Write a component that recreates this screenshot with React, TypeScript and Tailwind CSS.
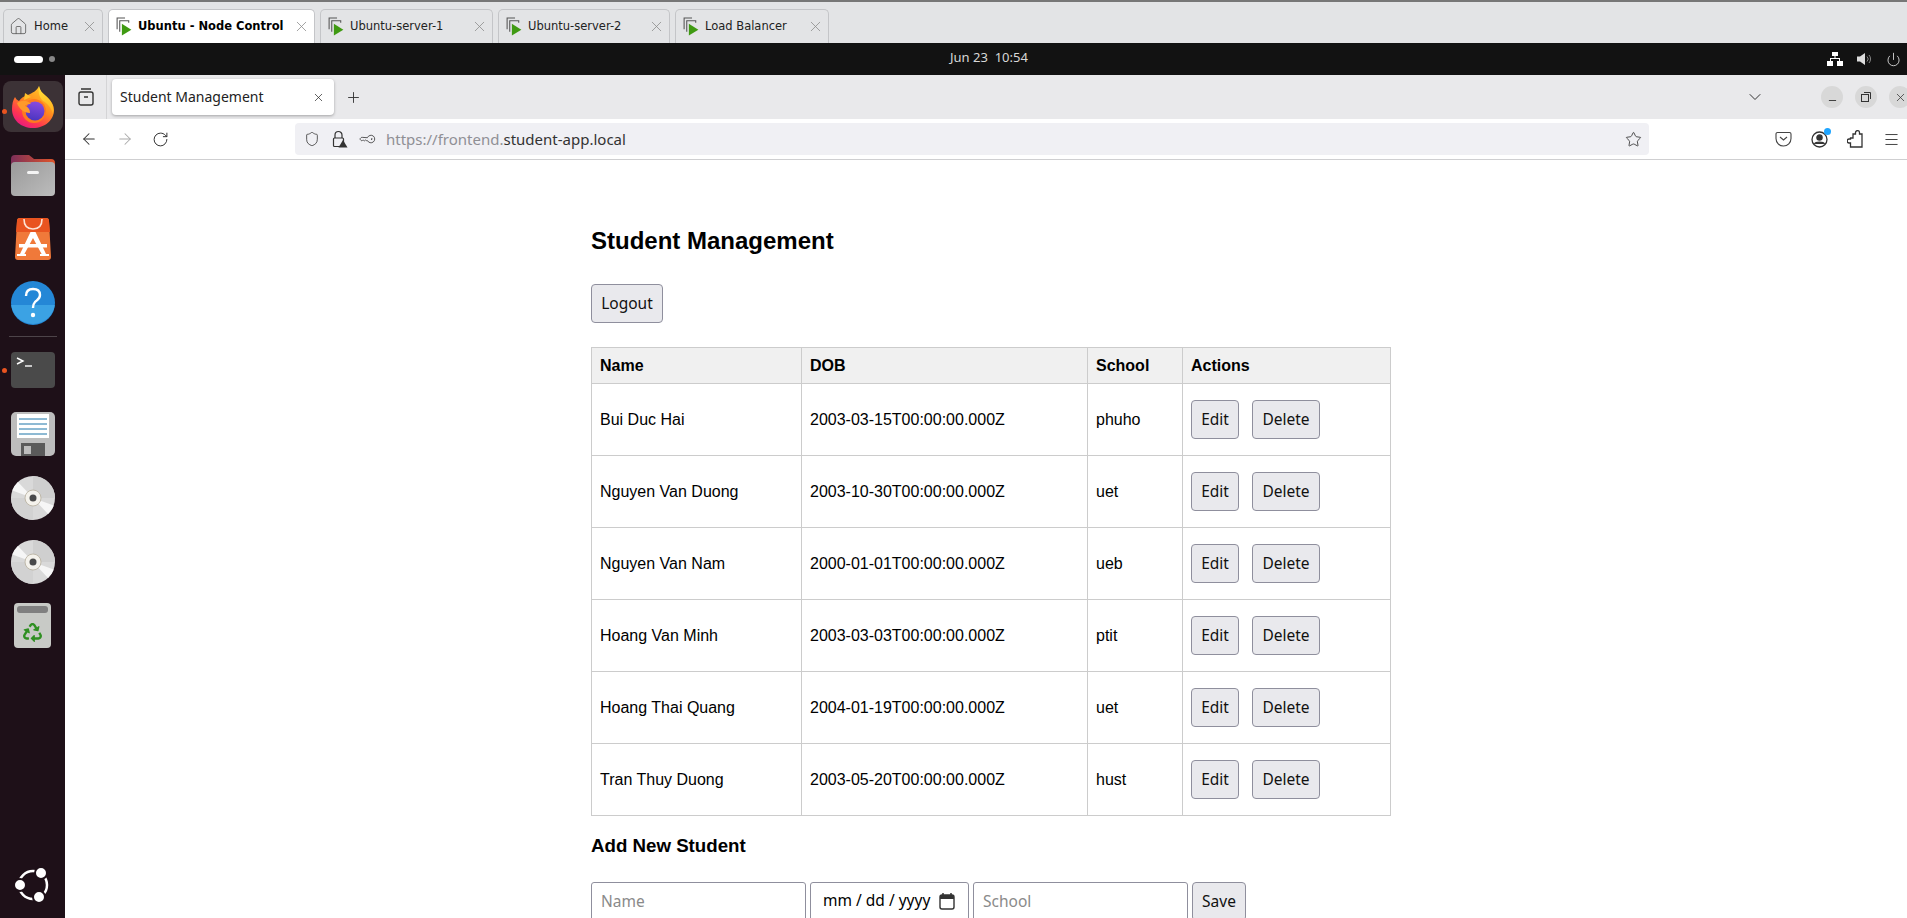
import { ArrowLeft, ArrowRight, ChevronDown, House, KeyRound, Menu, Minus, Plus, Power, RotateCw, Shield, Star, X } from "lucide-react";
import { FaRecycle } from "react-icons/fa";

const rows = [
  ["Bui Duc Hai", "2003-03-15T00:00:00.000Z", "phuho"],
  ["Nguyen Van Duong", "2003-10-30T00:00:00.000Z", "uet"],
  ["Nguyen Van Nam", "2000-01-01T00:00:00.000Z", "ueb"],
  ["Hoang Van Minh", "2003-03-03T00:00:00.000Z", "ptit"],
  ["Hoang Thai Quang", "2004-01-19T00:00:00.000Z", "uet"],
  ["Tran Thuy Duong", "2003-05-20T00:00:00.000Z", "hust"],
];

function VmIcon() {
  return (
    <svg width="19" height="19" viewBox="2.5 1.5 16 18" className="shrink-0">
      <path d="M3.5 13V2.5H11" fill="none" stroke="#555" strokeWidth="1" />
      <path d="M6 15.5V5h8.5v2" fill="none" stroke="#555" strokeWidth="1" />
      <path d="M8 8l9 5.5L8 19z" fill="#3f9a12" />
    </svg>
  );
}

function VmTab({ label, w, active }: { label: string; w: string; active?: boolean }) {
  return (
    <div className={`${w} h-[34px] flex items-center pl-[6px] pr-[4px] rounded-t-[5px] border-x border-t border-[#c4c5c8] ${active ? "bg-white font-bold text-black" : "bg-[#e3e4e6] text-[#222]"}`}>
      <VmIcon />
      <span className="ml-[4px] whitespace-nowrap">{label}</span>
      <X size={17} strokeWidth={1.1} className="ml-auto text-[#8a8a8a]" />
    </div>
  );
}

function FirefoxLogo() {
  return (
    <svg width="44" height="44" viewBox="0 0 44 44">
      <defs>
        <linearGradient id="ffa" x1="0.8" y1="0" x2="0.2" y2="1">
          <stop offset="0" stopColor="#ffd02a" />
          <stop offset="0.45" stopColor="#ff8a1e" />
          <stop offset="0.75" stopColor="#ff3750" />
          <stop offset="1" stopColor="#e31587" />
        </linearGradient>
        <linearGradient id="ffb" x1="0.5" y1="0" x2="0.5" y2="1">
          <stop offset="0" stopColor="#ffe23a" />
          <stop offset="1" stopColor="#ffae1c" />
        </linearGradient>
        <linearGradient id="ffc" x1="0.6" y1="0" x2="0.4" y2="1">
          <stop offset="0" stopColor="#8a4be0" />
          <stop offset="1" stopColor="#4a35c0" />
        </linearGradient>
      </defs>
      <path d="M28 1c1 6 5 8 9 12 4 4 6 8 6 12 0 10-9 18-21 18S1 35 1 24c0-5 1-9 3-12 1 2 2 3 4 4 2-3 5-5 9-6 4-2 9-4 11-9z" fill="url(#ffa)" />
      <path d="M28 1c1 6 5 8 9 12 4 4 6 9 5 16-2-7-6-11-10-13-4-4-5-9-4-15z" fill="url(#ffb)" />
      <circle cx="23" cy="26" r="12" fill="#ff7a1e" />
      <circle cx="24" cy="26" r="9.5" fill="url(#ffc)" />
      <path d="M6 18c5-3 10-3 14 1-3 0-6 1-6 2 3 1 5 3 5 7-6 0-11-4-13-10z" fill="#ff9a2a" />
      <path d="M14 8l6 4-7 3z" fill="#ffc02a" />
    </svg>
  );
}

function FolderIcon() {
  return (
    <svg width="44" height="42" viewBox="0 0 44 42">
      <defs>
        <linearGradient id="fold" x1="0" y1="0" x2="1" y2="0">
          <stop offset="0" stopColor="#7d2f59" />
          <stop offset="1" stopColor="#e0552a" />
        </linearGradient>
        <linearGradient id="foldb" x1="0" y1="0" x2="1" y2="1">
          <stop offset="0" stopColor="#9a9a9a" />
          <stop offset="1" stopColor="#bcbcbc" />
        </linearGradient>
      </defs>
      <path d="M0 4a4 4 0 014-4h14l5 4h17a4 4 0 014 4v10H0z" fill="url(#fold)" />
      <rect x="0" y="7" width="44" height="34" rx="4" fill="url(#foldb)" />
      <rect x="16" y="16" width="12" height="3" rx="1.5" fill="#f4f4f4" />
    </svg>
  );
}

function StoreIcon() {
  return (
    <svg width="36" height="42" viewBox="0 0 36 42">
      <path d="M2 3a3 3 0 013-3h26a3 3 0 013 3l2 36a3 3 0 01-3 3H3a3 3 0 01-3-3z" fill="#f0793a" />
      <path d="M2 3a3 3 0 013-3h26a3 3 0 013 3l1 11H1z" fill="#e95420" />
      <path d="M9 1c0 7 4 10 9 10s9-3 9-10" fill="none" stroke="#fde4d6" strokeWidth="1.6" />
      <path d="M15.5 14h5L31 36h3v2H25v-2h1.6L18 20 9.4 36H11v2H2v-2h3z" fill="#fff" />
      <rect x="4" y="26" width="28" height="3.5" fill="#fff" />
    </svg>
  );
}

function HelpIcon() {
  return (
    <svg width="44" height="44" viewBox="0 0 44 44">
      <circle cx="22" cy="22" r="22" fill="#2487d6" />
      <path d="M0.2 24h43.6A22 22 0 010.2 24z" fill="#3ba2e4" />
      <path d="M15 15c0-5 3-7 7-7s7 2 7 6-3 5-5 7-2 3-2 6" fill="none" stroke="#fff" strokeWidth="2.4" />
      <circle cx="22" cy="34" r="2.2" fill="#fff" />
    </svg>
  );
}

function TerminalIcon() {
  return (
    <svg width="44" height="36" viewBox="0 0 44 36">
      <rect width="44" height="36" rx="4" fill="#4a4a4a" />
      <path d="M6 6l6 3-6 3" fill="none" stroke="#fff" strokeWidth="1.4" />
      <path d="M14 14h7" stroke="#fff" strokeWidth="1.4" />
    </svg>
  );
}

function FloppyIcon() {
  return (
    <svg width="44" height="44" viewBox="0 0 44 44">
      <rect width="44" height="44" rx="5" fill="#bdbdbd" />
      <rect x="6" y="2" width="32" height="24" fill="#fff" />
      <path d="M8 7h28M8 12h28M8 17h28M8 22h28" stroke="#1d74a8" strokeWidth="1" />
      <rect x="10" y="31" width="24" height="13" fill="#5a5a5a" />
      <rect x="13" y="34" width="7" height="8" fill="#bdbdbd" />
    </svg>
  );
}

function CdIcon() {
  return (
    <svg width="44" height="44" viewBox="0 0 44 44">
      <circle cx="22" cy="22" r="22" fill="#d9d9d9" />
      <path d="M22 22L22 0A22 22 0 0144 22z" fill="#cfcfcf" />
      <path d="M22 22L22 44A22 22 0 010 22z" fill="#d2d2d2" />
      <path d="M22 22L1.3 14.5A22 22 0 017 6z" fill="#f6f6f6" />
      <path d="M22 22L42.7 29.5A22 22 0 0137 38z" fill="#f6f6f6" />
      <circle cx="22" cy="22" r="8" fill="#f4f2ec" stroke="#b5ad9c" strokeWidth="0.8" />
      <circle cx="22" cy="22" r="3.5" fill="#4a4a4a" />
    </svg>
  );
}

function TrashIcon() {
  return (
    <div className="w-[37px] h-[45px] rounded-[4px] bg-[#c8cac6] pt-[3px] px-[3px] flex flex-col items-center">
      <div className="w-full h-[7px] rounded-[3px] bg-[#808080]" />
      <FaRecycle size={19} className="mt-[10px] text-[#2f8f22]" />
    </div>
  );
}

function UbuntuLogo() {
  return (
    <svg width="36" height="36" viewBox="0 0 36 36">
      <circle cx="18" cy="18" r="14" fill="none" stroke="#fff" strokeWidth="2.5" />
      <circle cx="26" cy="6" r="6" fill="#fff" stroke="#1e1018" strokeWidth="2" />
      <circle cx="5" cy="18" r="6" fill="#fff" stroke="#1e1018" strokeWidth="2" />
      <circle cx="24" cy="30" r="6" fill="#fff" stroke="#1e1018" strokeWidth="2" />
    </svg>
  );
}

function PuzzleIcon() {
  return (
    <svg width="17" height="18" viewBox="0 0 17 18" fill="none" stroke="#333" strokeWidth="1.3">
      <path d="M6 4h2.5V2.6a2 2 0 014 0V4H15v13H3.5v-4H2.2a2 2 0 010-4H3.500V8H6z" />
    </svg>
  );
}

function CalendarIcon() {
  return (
    <svg width="18" height="18" viewBox="0 0 18 18" className="shrink-0">
      <rect x="2" y="3" width="14" height="14" rx="2" fill="none" stroke="#333" strokeWidth="1.4" />
      <path d="M2 4.500a1.500 1.500 0 011.500-1.500h11A1.500 1.500 0 0116 4.500V7H2z" fill="#333" />
      <path d="M5 1v3M13 1v3" stroke="#333" strokeWidth="1.5" />
    </svg>
  );
}

const btn = "h-[39px] rounded-[4px] border border-[#8f8f9d] bg-[#e9e9ed] text-[#111] text-[15.5px] [font-family:'Noto_Sans',sans-serif]";
const input = "h-[39px] rounded-[3px] border border-[#8f8f9d] bg-white px-[9px] pb-[2px] text-[15.5px] [font-family:'Noto_Sans',sans-serif] placeholder:text-[#8a8a8a] text-black";

function Sidebar() {
  return (
    <div className="w-[65px] shrink-0 bg-[#1e1018] flex flex-col items-center relative">
      <div className="absolute left-[2px] top-[34px] w-[5px] h-[5px] rounded-full bg-[#e95420]" />
      <div className="absolute left-[2px] top-[293px] w-[5px] h-[5px] rounded-full bg-[#e95420]" />
      <div className="mt-[6px] w-[60px] h-[51px] rounded-[8px] bg-[#3c3236] flex items-center justify-center"><FirefoxLogo /></div>
      <div className="mt-[23px] h-[42px]"><FolderIcon /></div>
      <div className="mt-[21px] h-[42px]"><StoreIcon /></div>
      <div className="mt-[21px] h-[44px]"><HelpIcon /></div>
      <div className="mt-[11px] w-[48px] h-px bg-[#4d4449]" />
      <div className="mt-[15px] h-[36px]"><TerminalIcon /></div>
      <div className="mt-[24px] h-[44px]"><FloppyIcon /></div>
      <div className="mt-[20px] h-[44px]"><CdIcon /></div>
      <div className="mt-[20px] h-[44px]"><CdIcon /></div>
      <div className="mt-[19px] h-[45px]"><TrashIcon /></div>
      <div className="mt-auto mb-[15px]"><UbuntuLogo /></div>
    </div>
  );
}

export default function App() {
  return (
    <div className="w-[1907px] h-[918px] overflow-hidden flex flex-col bg-white [font-family:'Liberation_Sans',sans-serif]">
      {/* remote console tabs */}
      <div className="h-[43px] shrink-0 bg-[#e3e4e6] border-t-2 border-[#777] flex items-end pl-[3px] gap-[5px] text-[11.5px] [font-family:'DejaVu_Sans',sans-serif]">
        <div className="w-[100px] h-[34px] flex items-center pl-[5px] pr-[4px] rounded-t-[5px] border-x border-t border-[#c4c5c8] bg-[#e3e4e6] text-[#222]">
          <House size={19} strokeWidth={1} className="text-[#555]" />
          <span className="ml-[6px]">Home</span>
          <X size={17} strokeWidth={1.1} className="ml-auto text-[#8a8a8a]" />
        </div>
        <VmTab label="Ubuntu - Node Control" w="w-[207px]" active />
        <VmTab label="Ubuntu-server-1" w="w-[173px]" />
        <VmTab label="Ubuntu-server-2" w="w-[172px]" />
        <VmTab label="Load Balancer" w="w-[154px]" />
      </div>

      {/* GNOME top bar */}
      <div className="h-[32px] shrink-0 bg-[#121212] flex items-center justify-between relative pl-[14px] pr-[6px]">
        <div className="flex items-center gap-[6px]">
          <div className="w-[29px] h-[7px] rounded-full bg-white" />
          <div className="w-[6px] h-[6px] rounded-full bg-[#888]" />
        </div>
        <div className="absolute left-[950px] top-[6px] text-[13px] leading-[16px] text-[#d8d8d8] whitespace-pre [font-family:'Noto_Sans',sans-serif]">Jun 23  10:54</div>
        <div className="flex items-center gap-[14px]">
          <svg width="16" height="14" viewBox="0 0 16 14" fill="#fff">
            <rect x="5" y="0" width="6" height="4" />
            <rect x="0" y="9" width="6" height="5" />
            <rect x="10" y="9" width="6" height="5" />
            <path d="M7.5 4h1v2H13v3h-1V7H4v2H3V6h4.500z" />
          </svg>
          <svg width="15" height="14" viewBox="0 0 15 14">
            <path d="M0 4.500h3L8 1v12L3 9.500H0z" fill="#ddd" />
            <path d="M10 4.500a3.500 3.500 0 010 5M12 3a6 6 0 010 8" fill="none" stroke="#888" strokeWidth="1" />
          </svg>
          <Power size={15} strokeWidth={1.4} className="text-[#ddd]" />
        </div>
      </div>

      <div className="flex-1 flex min-h-0">
        <Sidebar />
        <div className="flex-1 flex flex-col min-w-0">
          {/* Firefox tab strip */}
          <div className="h-[44px] shrink-0 bg-[#e9e9eb] flex items-center">
            <div className="w-[42px] h-full border-r border-[#d4d4d6] flex items-center justify-center">
              <svg width="16" height="18" viewBox="0 0 16 18" fill="none" stroke="#333" strokeWidth="1.4">
                <rect x="1" y="4" width="14" height="13" rx="2" />
                <path d="M3 1h10M6 9h4" />
              </svg>
            </div>
            <div className="ml-[5px] w-[222px] h-[36px] rounded-[4px] bg-white shadow-[0_1px_3px_rgba(0,0,0,0.3)] flex items-center pl-[8px] pr-[9px] text-[14px] text-[#222] [font-family:'Noto_Sans',sans-serif]">
              <span className="pb-[2px]">Student Management</span>
              <X size={13} strokeWidth={1.3} className="ml-auto" />
            </div>
            <Plus size={17} strokeWidth={1.3} className="ml-[11px] text-[#333]" />
            <div className="ml-auto -mr-[4px] flex items-center gap-[12px]">
              <ChevronDown size={20} strokeWidth={1.2} className="mr-[44px] text-[#333]" />
              <div className="w-[22px] h-[22px] rounded-full bg-[#d8d8d8] flex items-center justify-center"><Minus size={11} className="mt-[6px] text-[#333]" /></div>
              <div className="w-[22px] h-[22px] rounded-full bg-[#d8d8d8] flex items-center justify-center">
                <svg width="10" height="10" viewBox="0 0 10 10" fill="none" stroke="#333" strokeWidth="1"><rect x="0.5" y="2.500" width="7" height="7" /><path d="M3 .5h6.500V7" /></svg>
              </div>
              <div className="w-[22px] h-[22px] rounded-full bg-[#d8d8d8] flex items-center justify-center"><X size={13} strokeWidth={1.4} className="text-[#333]" /></div>
            </div>
          </div>

          {/* Firefox nav bar */}
          <div className="h-[41px] shrink-0 bg-white border-b border-[#cfcfd1] flex items-center text-[#333]">
            <ArrowLeft size={18} strokeWidth={1.4} className="ml-[15px]" />
            <ArrowRight size={18} strokeWidth={1.4} className="ml-[18px] text-[#aaa]" />
            <RotateCw size={17} strokeWidth={1.4} className="ml-[18px]" />
            <div className="ml-[126px] w-[1354px] h-[32px] rounded-[4px] bg-[#f0f0f4] flex items-center pl-[9px] pr-[7px]">
              <Shield size={16} strokeWidth={1.2} />
              <svg width="18" height="18" viewBox="0 0 18 18" className="ml-[10px]" fill="none" stroke="#333" strokeWidth="1.2">
                <path d="M5 8V5a3.500 3.500 0 017 0v3" />
                <rect x="3.500" y="8" width="10" height="8.500" rx="1" />
                <path d="M13 10l4.500 7.500h-9z" fill="#333" stroke="none" />
              </svg>
              <KeyRound size={14} strokeWidth={1.3} className="ml-[13px] rotate-45" />
              <span className="ml-[11px] text-[15px] text-[#333] [font-family:'Noto_Sans',sans-serif]"><span className="text-[#8f8f94]">https://frontend.</span>student-app.local</span>
              <Star size={17} strokeWidth={1.2} className="ml-auto" />
            </div>
            <div className="ml-[126px] flex items-center gap-[19px]">
              <svg width="17" height="16" viewBox="0 0 17 16" fill="none" stroke="#444" strokeWidth="1.1"><path d="M1 3a1.500 1.500 0 011.500-1.500h12A1.500 1.500 0 0116 3v4.500a7.500 7.500 0 01-15 0z" /><path d="M5 6l3.500 3L12 6" /></svg>
              <div className="relative w-[17px] h-[17px]">
                <svg width="17" height="17" viewBox="0 0 17 17" fill="none" stroke="#333" strokeWidth="1.3"><circle cx="8.500" cy="8.500" r="7.500" /><circle cx="8.500" cy="6.500" r="2.600" fill="#333" /><path d="M3.500 13c1-2.500 9-2.500 10 0" fill="#333" /></svg>
                <div className="absolute -top-[3px] -right-[3px] w-[7px] h-[7px] rounded-full bg-[#1fa5ff]" />
              </div>
              <PuzzleIcon />
              <Menu size={17} strokeWidth={1.3} />
            </div>
          </div>

          {/* Page */}
          <div className="flex-1 min-h-0 overflow-hidden bg-white pl-[526px] text-black text-[16px]">
            <h1 className="w-[800px] mt-[67px] text-[24px] leading-[28px] font-bold">Student Management</h1>
            <button className={`${btn} w-[72px] mt-[29px] block`}>Logout</button>
            <table className="w-[799px] mt-[24px] border-collapse table-fixed">
              <colgroup>
                <col className="w-[210px]" />
                <col className="w-[286px]" />
                <col className="w-[95px]" />
                <col className="w-[208px]" />
              </colgroup>
              <thead>
                <tr className="h-[36px] bg-[#f0f0f0]">
                  {["Name", "DOB", "School", "Actions"].map((h) => (
                    <th key={h} className="border border-[#ccc] px-[8px] py-0 text-left font-bold">{h}</th>
                  ))}
                </tr>
              </thead>
              <tbody>
                {rows.map((r) => (
                  <tr key={r[0]} className="h-[72px]">
                    <td className="border border-[#ccc] px-[8px] py-0">{r[0]}</td>
                    <td className="border border-[#ccc] px-[8px] py-0">{r[1]}</td>
                    <td className="border border-[#ccc] px-[8px] py-0">{r[2]}</td>
                    <td className="border border-[#ccc] px-[8px] py-0">
                      <div className="flex gap-[13px]">
                        <button className={`${btn} w-[48px]`}>Edit</button>
                        <button className={`${btn} w-[68px]`}>Delete</button>
                      </div>
                    </td>
                  </tr>
                ))}
              </tbody>
            </table>
            <h3 className="mt-[19px] text-[18.7px] leading-[22px] font-bold">Add New Student</h3>
            <div className="mt-[25px] flex gap-[4px]">
              <input className={`${input} w-[215px]`} placeholder="Name" />
              <div className={`${input} w-[159px] flex items-center pl-[12px] pr-[12px] whitespace-pre`}>
                <span>mm / dd / yyyy</span>
                <div className="ml-auto"><CalendarIcon /></div>
              </div>
              <input className={`${input} w-[215px]`} placeholder="School" />
              <button className={`${btn} w-[54px]`}>Save</button>
            </div>
          </div>
        </div>
      </div>
    </div>
  );
}
